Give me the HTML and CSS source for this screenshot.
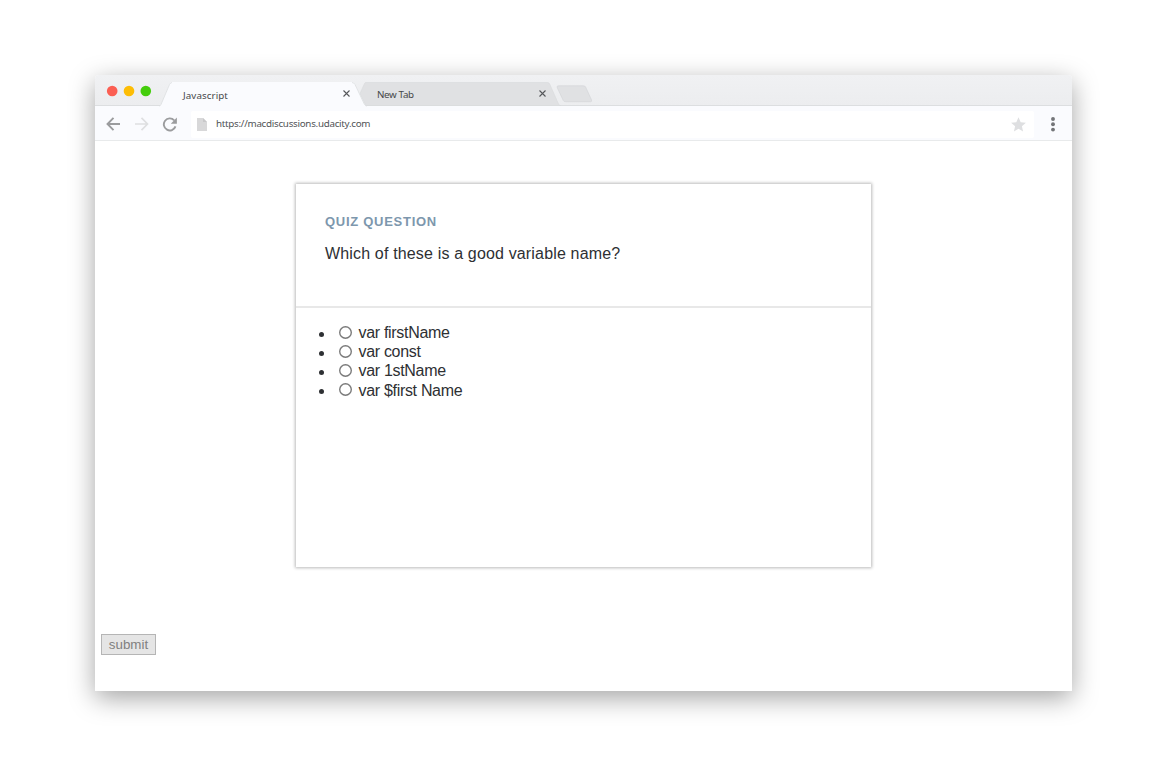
FILE: index.html
```html
<!DOCTYPE html>
<html lang="en">
<head>
<meta charset="utf-8">
<title>Javascript</title>
<link rel="stylesheet" href="styles.css">
</head>
<body>
<div class="window">
  <header class="tabstrip">
    <svg class="lights" width="64" height="31" viewBox="0 0 64 31"><circle cx="17.200" cy="16" r="5.300" fill="#fb5f53"/><circle cx="34" cy="16" r="5.300" fill="#fdbd05"/><circle cx="50.800" cy="16" r="5.300" fill="#44cd0c"/></svg>
    <div class="tab tab-active">
      <svg class="tab-shape" width="208" height="25" viewBox="0 0 208 25"><path d="M0 25V24.2Q1.200 24 2 22.500L10.500 2Q11.500 0 13 0H193Q195 0 196 2L205.500 22.500Q206.500 24 208 24.200V25Z" fill="#fafbfe"/><path d="M0 24Q1.200 24 2 22.500L10.500 2.500Q11.500 .5 13 .5M193 .5Q195 .5 196 2.500L205.500 22.500Q206.500 24 208 24" fill="none" stroke="#dcdee0" stroke-width=".8"/></svg>
      <span class="tab-title title-active">Javascript</span>
      <svg class="close" width="7" height="7" viewBox="0 0 7 7"><path d="M.5 .5L6.500 6.500M6.500 .5L.5 6.500"/></svg>
    </div>
    <div class="tab tab-idle">
      <svg class="tab-shape" width="202" height="24" viewBox="0 0 202 24"><path d="M0 11.500L4.500 1.500Q5 .5 6 .5H187.500Q189 .5 189.600 1.800L198.500 22Q199.200 23.500 200.500 23.500H6Z" fill="#e0e1e3" stroke="#d8dadc" stroke-width=".6"/></svg>
      <span class="tab-title">New Tab</span>
      <svg class="close" width="7" height="7" viewBox="0 0 7 7"><path d="M.5 .5L6.500 6.500M6.500 .5L.5 6.500"/></svg>
    </div>
    <svg class="new-tab" width="37" height="18" viewBox="0 0 37 18"><path d="M2.500 .8H27.500Q29 .8 29.600 2L35.500 15Q36.200 16.700 34.500 16.700H9.500Q8 16.700 7.300 15.500L1.200 2.500Q.6 .8 2.500 .8Z" fill="#e0e1e3" stroke="#d4d6d8" stroke-width=".7"/></svg>
  </header>
  <nav class="toolbar">
    <svg class="back" width="15" height="14" viewBox="0 0 15 14"><path d="M14 7H1.800M7.500 .9L1.500 7L7.500 13.100" fill="none" stroke="#9b9c9e" stroke-width="1.900"/></svg>
    <svg class="forward" width="15" height="14" viewBox="0 0 15 14"><path d="M1 7H13.200M7.500 .9L13.500 7L7.500 13.100" fill="none" stroke="#dedfe1" stroke-width="1.700"/></svg>
    <svg class="reload" width="16" height="15" viewBox="-.5 0 16 15"><path d="M13 9.400A6 6 0 1 1 11.700 3.300" fill="none" stroke="#9b9c9e" stroke-width="1.900"/><path d="M14.400 .4V6.700H8.300Z" fill="#9b9c9e"/></svg>
    <div class="address">
      <svg class="page" width="10" height="13" viewBox="0 0 10 13"><path d="M0 0H6L10 4V13H0Z" fill="#d8d8d9"/><path d="M6 0L10 4H6Z" fill="#c8c8c9"/></svg>
      <span class="url">https://macdiscussions.udacity.com</span>
      <svg class="star" width="15" height="15" viewBox="0 0 15 15"><path d="M7.500 .3L9.700 5.200L14.900 5.700L10.900 9.200L12.100 14.500L7.500 11.700L2.900 14.500L4.100 9.200L.1 5.700L5.300 5.200Z" fill="#dedfe1"/></svg>
    </div>
    <svg class="menu" width="4" height="15" viewBox="0 0 4 15"><circle cx="2" cy="2" r="1.950"/><circle cx="2" cy="7.300" r="1.950"/><circle cx="2" cy="12.600" r="1.950"/></svg>
  </nav>
  <main class="content">
    <section class="card">
      <div class="question">
        <h1 class="label">QUIZ QUESTION</h1>
        <p class="prompt">Which of these is a good variable name?</p>
      </div>
      <ul class="answers">
        <li><label><input type="radio" name="answer">var firstName</label></li>
        <li><label><input type="radio" name="answer">var const</label></li>
        <li><label><input type="radio" name="answer">var 1stName</label></li>
        <li><label><input type="radio" name="answer">var $first Name</label></li>
      </ul>
    </section>
    <button class="submit">submit</button>
  </main>
</div>
</body>
</html>
```
FILE: styles.css
```css
* { box-sizing: border-box; }
body { margin: 0; padding: 75px 93px 82px 95px; background: #fff; font-family: "Liberation Sans", Arial, sans-serif; overflow: hidden; }
svg { display: block; flex: none; }
.window { width: 977px; height: 616px; background: #fff; border-radius: 4px 4px 0 0; box-shadow: 0 7px 26px rgba(0,0,0,.36); }
.tabstrip { height: 31px; display: flex; align-items: flex-start; background: linear-gradient(#f0f1f3, #ecedef); border-bottom: 1px solid #dcdee0; border-radius: 4px 4px 0 0; }
.tab { position: relative; margin-top: 7px; height: 24px; display: flex; align-items: flex-start; font: 9.8px/14px "Noto Sans", sans-serif; color: #46484a; }
.tab-active { width: 201px; z-index: 1; padding: 0 10px 0 24px; }
.tab-idle { width: 202px; padding: 0 16px 0 17px; }
.tab-shape { position: absolute; left: 0; top: 0; }
.tab-title { position: relative; flex: 1; margin-top: 6px; letter-spacing: -.35px; }
.title-active { margin-top: 7px; letter-spacing: .08px; }
.close { position: relative; margin-top: 8px; fill: none; stroke: #55575a; stroke-width: 1.1; }
.new-tab { margin: 10px 0 0 -6px; }
.toolbar { height: 35px; padding-left: 11px; display: flex; align-items: flex-start; background: #fafbfe; border-bottom: 1px solid #e8eaeb; }
.back { margin-top: 11px; }
.forward { margin: 11px 0 0 13px; }
.reload { margin: 11px 0 0 13px; }
.address { width: 843px; height: 27px; margin: 5px 0 0 13px; padding-left: 6px; border-radius: 2px; background: #fff; display: flex; }
.page { margin-top: 7px; }
.url { flex: 1; margin: 6px 0 0 9px; font: 9.8px/14px "Noto Sans", sans-serif; letter-spacing: -.28px; color: #515356; }
.star { margin: 6px 8px 0 0; }
.menu { margin: 11px 0 0 17px; fill: #737578; }
.content { height: 550px; padding: 43px 6px 0; display: flex; flex-direction: column; align-items: flex-start; }
.card { width: 575px; height: 383px; margin-left: 195px; background: #fff; box-shadow: 0 0 3px 1px rgba(0,0,0,.27); }
.question { height: 124px; padding: 29px; border-bottom: 2px solid #e8e8e8; }
.label { margin: 0; font-size: 13px; line-height: 17px; letter-spacing: .72px; color: #7d97ad; }
.prompt { margin: 14px 0 0; font-size: 16px; line-height: 19px; letter-spacing: .16px; color: #2e3033; }
.answers { margin: 15px 0 0; padding-left: 39px; font-size: 16px; line-height: 19.2px; letter-spacing: -.31px; color: #2e3033; }
.answers li::marker { font-size: 15px; }
.answers label { display: flex; align-items: flex-start; }
.answers input { appearance: none; width: 13px; height: 13px; margin: 2.5px 7px 0 3.5px; border-radius: 50%; background: #fff; box-shadow: inset 0 0 0 1.4px #7a7a7a; }
.submit { width: 55px; height: 21px; margin-top: 67px; padding: 0; border: 1px solid #b5b5b5; background: #e5e5e5; color: #808080; font: 13.33px/17px "Liberation Sans", Arial, sans-serif; }
```
